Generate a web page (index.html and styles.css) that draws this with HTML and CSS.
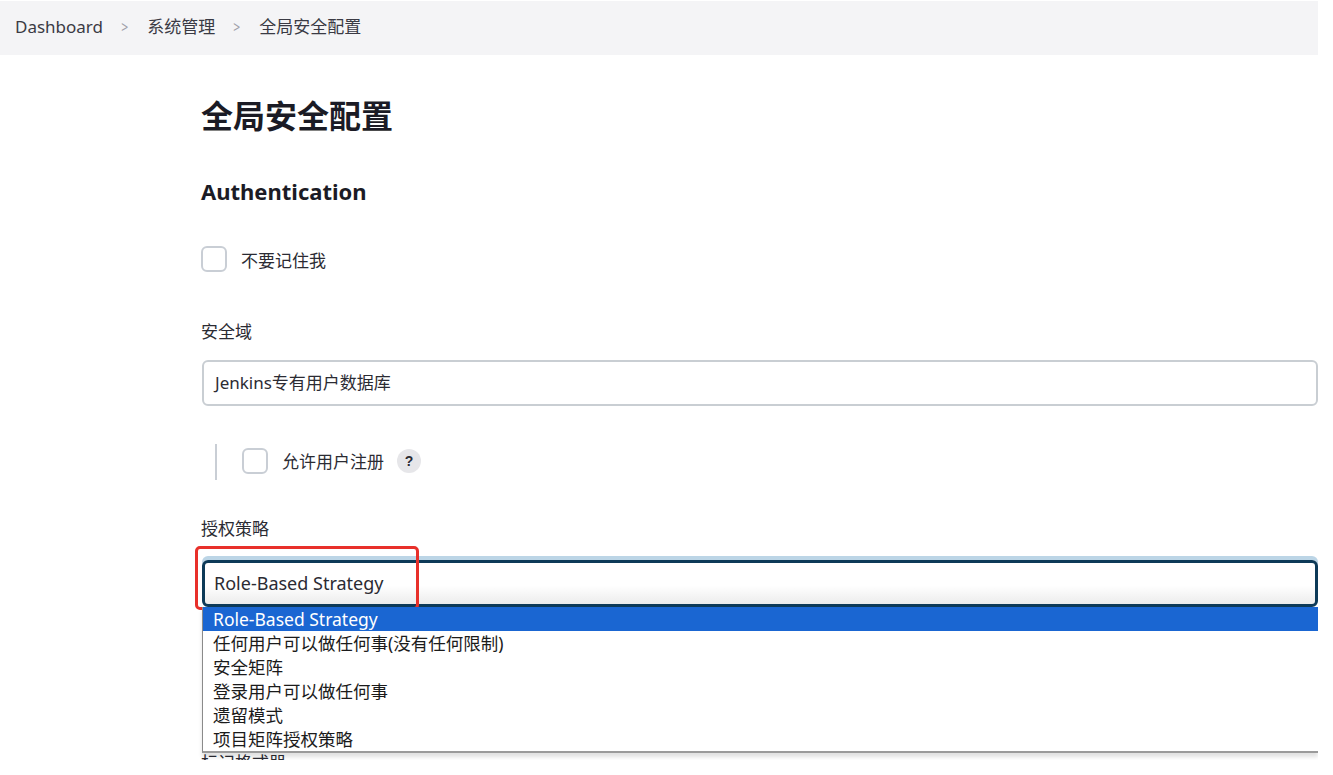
FILE: index.html
```html
<!DOCTYPE html>
<html lang="zh-CN">
<head>
<meta charset="utf-8">
<title>全局安全配置</title>
<link rel="stylesheet" href="styles.css">
</head>
<body>
<div class="page">
  <nav class="crumbs">
    <span class="crumb">Dashboard</span>
    <span class="sep">&gt;</span>
    <span class="crumb">系统管理</span>
    <span class="sep">&gt;</span>
    <span class="crumb">全局安全配置</span>
  </nav>
  <main class="main">
    <h1 class="title">全局安全配置</h1>
    <h2 class="section">Authentication</h2>
    <div class="check-row first">
      <span class="checkbox"></span>
      <span class="check-label">不要记住我</span>
    </div>
    <div class="field-label realm">安全域</div>
    <div class="input">Jenkins专有用户数据库</div>
    <div class="nested">
      <span class="bar"></span>
      <span class="checkbox"></span>
      <span class="check-label">允许用户注册</span>
      <span class="help">?</span>
    </div>
    <div class="field-label authz">授权策略</div>
    <div class="select-wrap">
      <div class="select">Role-Based Strategy</div>
      <div class="highlight-box"></div>
      <ul class="dropdown">
        <li class="opt active">Role-Based Strategy</li>
        <li class="opt">任何用户可以做任何事(没有任何限制)</li>
        <li class="opt">安全矩阵</li>
        <li class="opt">登录用户可以做任何事</li>
        <li class="opt">遗留模式</li>
        <li class="opt">项目矩阵授权策略</li>
      </ul>
    </div>
    <div class="field-label below">标记格式器</div>
  </main>
</div>
</body>
</html>
```

FILE: styles.css
```css
* { box-sizing: border-box; }
html, body {
  margin: 0;
  padding: 0;
  background: #ffffff;
  font-family: "Noto Sans", "Noto Sans CJK SC", sans-serif;
  color: #1f1f29;
  overflow: hidden;
}
.page {
  width: 1318px;
  height: 760px;
  overflow: hidden;
}
.crumbs {
  margin-top: 1px;
  height: 54px;
  background: #f4f4f6;
  display: flex;
  align-items: center;
  padding-left: 15px;
  padding-bottom: 3px;
  font-size: 17px;
  color: #3a3a44;
}
.crumb { line-height: 20px; }
.sep {
  color: #a0a0a8;
  margin: 0 18px 0 17px;
  font-size: 16px;
  transform: scaleX(0.75);
}
.main {
  padding-left: 201px;
}
.title {
  margin: 37px 0 0 0;
  font-size: 32px;
  line-height: 44px;
  font-weight: 700;
  color: #1b1b25;
  font-family: "Noto Sans CJK SC", sans-serif;
}
.section {
  margin: 40px 0 0 0;
  font-size: 22px;
  line-height: 30px;
  font-weight: 700;
  color: #1b1b25;
}
.check-row {
  display: flex;
  align-items: center;
  height: 26px;
  margin-top: 40px;
}
.checkbox {
  width: 26px;
  height: 26px;
  border: 2px solid #c9ced5;
  border-radius: 6px;
  background: #fff;
  flex: none;
}
.check-label {
  margin-left: 14px;
  font-size: 17px;
  color: #2b2b33;
  font-family: "Noto Sans CJK SC", sans-serif;
}
.field-label {
  font-size: 17px;
  line-height: 22px;
  color: #2b2b33;
  font-family: "Noto Sans CJK SC", sans-serif;
}
.realm { margin-top: 48px; }
.input {
  margin-top: 18px;
  margin-left: 1px;
  height: 46px;
  border: 2px solid #c9ced3;
  border-radius: 6px;
  padding-left: 11px;
  font-size: 17px;
  line-height: 42px;
  color: #2b2b33;
}
.nested {
  display: flex;
  align-items: center;
  height: 36px;
  margin-top: 38px;
  margin-left: 14px;
}
.bar {
  width: 2px;
  height: 36px;
  background: #c9ced5;
  margin-right: 25px;
}
.nested .checkbox { margin-top: -3px; }
.nested .check-label { margin-left: 14px; margin-top: -3px; }
.help {
  margin-left: 13px;
  margin-top: -3px;
  width: 24px;
  height: 24px;
  border-radius: 50%;
  background: #e6e6e9;
  color: #2b2b33;
  font-size: 14px;
  font-weight: 700;
  display: flex;
  align-items: center;
  justify-content: center;
  font-family: "Liberation Sans", sans-serif;
}
.authz { margin-top: 37px; }
.select-wrap {
  position: relative;
  margin-top: 21px;
  margin-left: 1px;
}
.select {
  height: 47px;
  border: 3px solid #0d3a58;
  border-radius: 6px;
  box-shadow: 0 -4px 0 0 #bcd5e6;
  background: linear-gradient(#ffffff 55%, #ececec);
  padding-left: 9px;
  font-size: 18px;
  line-height: 40px;
  color: #2b2b33;
}
.highlight-box {
  position: absolute;
  left: -7px;
  top: -14px;
  width: 224px;
  height: 64px;
  border: 3px solid #e8302a;
  border-radius: 5px;
  pointer-events: none;
}
.dropdown {
  position: absolute;
  left: 0;
  right: 0;
  top: 47px;
  margin: 0;
  padding: 0;
  list-style: none;
  background: #ffffff;
  border-left: 1px solid #8a8a8a;
  border-bottom: 2px solid #9a9a9a;
  box-shadow: 0 4px 4px rgba(0,0,0,0.12);
  z-index: 2;
}
.opt {
  height: 24px;
  line-height: 24px;
  padding-left: 10px;
  font-size: 17.5px;
  color: #1b1b1b;
  font-family: "Noto Sans", "Noto Sans CJK SC", sans-serif;
  white-space: nowrap;
}
.opt.active {
  background: #1a66d2;
  color: #ffffff;
}
.below {
  margin-top: 144px;
}
```
